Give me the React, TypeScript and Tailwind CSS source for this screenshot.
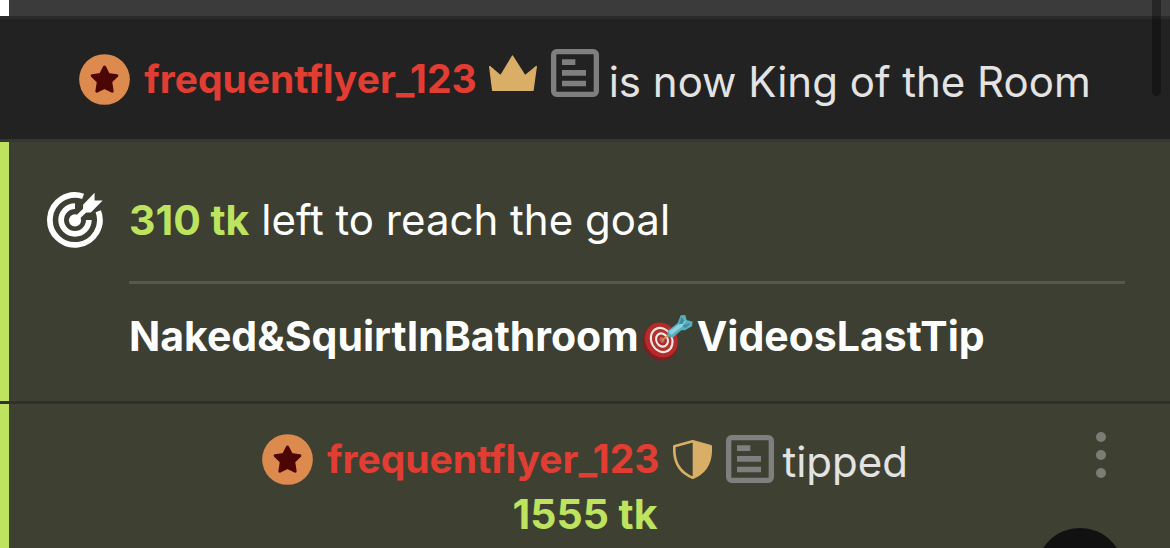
import type { ReactNode } from 'react'

function StarBadge() {
  return (
    <svg viewBox="0 0 153 153" className="size-[51px] shrink-0" aria-hidden="true">
      <circle cx="76.5" cy="76.5" r="76" fill="#dd8a4e" />
      <path
        d="M76.500 39 L88 61.500 L113.500 65 L95 83 L99.500 111.500 L76.500 100 L53.500 111.500 L58 83 L39.500 65 L65 61.500 Z"
        fill="#4c0603"
        stroke="#4c0603"
        strokeWidth="9"
        strokeLinejoin="round"
      />
    </svg>
  )
}

function CrownIcon() {
  return (
    <svg viewBox="87 74 145 109" className="h-9 w-12" aria-hidden="true">
      <path
        d="M89 109 122 137 158 77 196 137 230 109 220 181H98Z"
        fill="#d9ae66"
        stroke="#d9ae66"
        strokeWidth="4"
        strokeLinejoin="round"
      />
    </svg>
  )
}

function ShieldIcon() {
  return (
    <svg viewBox="96 57 117 117" className="size-[39px]" aria-hidden="true">
      <path
        d="M155 61 209 76C211 112 203 151 155 170 107 151 98 112 100 76Z"
        fill="none"
        stroke="#d9ae66"
        strokeWidth="8"
        strokeLinejoin="round"
      />
      <path d="M155 61 209 76C211 112 203 151 155 170Z" fill="#d9ae66" />
    </svg>
  )
}

function NotesIcon() {
  return (
    <svg viewBox="0 0 144 144" className="size-12" fill="#7f7f7f" aria-hidden="true">
      <rect x="8" y="8" width="128" height="128" rx="9" fill="none" stroke="#7f7f7f" strokeWidth="16" />
      <path d="M33 31h40v17H33zM33 63h72v17H33zM33 95h72v17H33z" />
    </svg>
  )
}

function GoalIcon() {
  return (
    <svg viewBox="142 97 166 166" className="size-14 shrink-0" fill="none" aria-hidden="true">
      <path d="M249 110A74 74 0 1 0 294 154" stroke="#fff" strokeWidth="17" />
      <path d="M225 139A41 41 0 1 0 266 180" stroke="#fff" strokeWidth="17" />
      <path d="M225 180 260 146" stroke="#fff" strokeWidth="14" />
      <circle cx="225" cy="181" r="18" fill="#fff" />
      <path d="M249 135 283 99V122H307L272 158H249Z" fill="#fff" />
    </svg>
  )
}

function DartEmoji() {
  return (
    <svg viewBox="0 0 156 144" className="mx-[3px] mt-1 h-12 w-[52px] shrink-0" role="img" aria-label="dart">
      <ellipse cx="55" cy="84" rx="51" ry="57" fill="#861b1e" transform="rotate(-28 55 84)" />
      <ellipse cx="58" cy="78" rx="48" ry="54" fill="#b52a2a" transform="rotate(-28 58 78)" />
      <ellipse cx="59" cy="78" rx="34" ry="41" fill="#f2e9e2" transform="rotate(-28 59 78)" />
      <ellipse cx="59" cy="78" rx="28" ry="34" fill="#b0322f" transform="rotate(-28 59 78)" />
      <ellipse cx="60" cy="78" rx="20" ry="24" fill="#f2e9e2" transform="rotate(-28 60 78)" />
      <ellipse cx="60" cy="78" rx="14" ry="17" fill="#a82c2a" transform="rotate(-28 60 78)" />
      <ellipse cx="60" cy="78" rx="7" ry="9" fill="#c9635a" transform="rotate(-28 60 78)" />
      <path d="M60 79 86 58" stroke="#c79b48" strokeWidth="5" />
      <path d="M77 51 107 27 116 4 130 3 134 18 152 23 150 37 129 49 118 49 92 71 77 67Z" fill="#58aebd" />
      <path d="M80 53 112 29 133 19 120 38 88 62Z" fill="#8ad3db" />
      <path d="M111 31 119 8 126 20 123 29ZM122 34 147 28 129 42Z" fill="#388c9d" />
    </svg>
  )
}

function User({ name }: { name: string }) {
  return (
    <button type="button" className="flex items-center gap-3.5 text-[39px] font-bold text-[#e13d33]">
      <StarBadge />
      {name}
    </button>
  )
}

function Tokens({ children }: { children: ReactNode }) {
  return <strong className="text-[41px] font-bold text-[#bde35f]">{children}</strong>
}

export default function App() {
  return (
    <main className="flex min-h-screen flex-col overflow-hidden bg-[#222222] font-['Inter',sans-serif] text-[42px] leading-[56px] text-[#e3e3e3]">
      <div className="h-4 border-l-[9px] border-white bg-[#3b3b3b]" />

      {/* King of the room notice */}
      <div className="flex h-[126px] items-center justify-center border-y-[3px] border-t-[#2b2b2b] border-b-[#363735]">
        <User name="frequentflyer_123" />
        <div className="ml-3 flex items-center gap-3.5 pb-3">
          <CrownIcon />
          <NotesIcon />
        </div>
        <span className="ml-2.5 pt-1.5">is now King of the Room</span>
      </div>

      {/* Room goal */}
      <section className="flex gap-[26px] border-l-[9px] border-[#bde35f] bg-[#3c3f31] pt-[50px] pr-[45px] pb-[37px] pl-[38px] text-white">
        <GoalIcon />
        <div className="flex-1">
          <p>
            <Tokens>310 tk</Tokens> left to reach the goal
          </p>
          <hr className="mt-[33px] mb-6 border-t-[3px] border-[#55584b]" />
          <h2 className="flex items-center text-[41px] font-bold">
            Naked&amp;SquirtInBathroom
            <DartEmoji />
            VideosLastTip
          </h2>
        </div>
      </section>

      <div className="h-[3px] bg-[#2f312e]" />

      {/* Tip message */}
      <section className="relative flex-1 border-l-[9px] border-[#bde35f] bg-[#3e4132] pt-6 pr-[9px]">
        <div className="flex items-center justify-center">
          <User name="frequentflyer_123" />
          <div className="ml-3.5 flex items-center gap-3.5">
            <ShieldIcon />
            <NotesIcon />
          </div>
          <span className="ml-2 pt-1.5">tipped</span>
        </div>
        <p className="-mt-1 text-center">
          <Tokens>1555 tk</Tokens>
        </p>
        <button type="button" aria-label="Message options" className="absolute top-7 right-16 flex flex-col gap-2">
          <span className="size-2.5 rounded-full bg-[#7b7d75]" />
          <span className="size-2.5 rounded-full bg-[#7b7d75]" />
          <span className="size-2.5 rounded-full bg-[#7b7d75]" />
        </button>
      </section>

      {/* Scrollbar thumb and floating button */}
      <div className="fixed top-0 right-[9px] h-24 w-[9px] rounded-b-full bg-black/35" />
      <button type="button" aria-label="Scroll to latest" className="fixed right-[46px] -bottom-[68px] size-[88px] rounded-full bg-[#111111]" />
    </main>
  )
}
